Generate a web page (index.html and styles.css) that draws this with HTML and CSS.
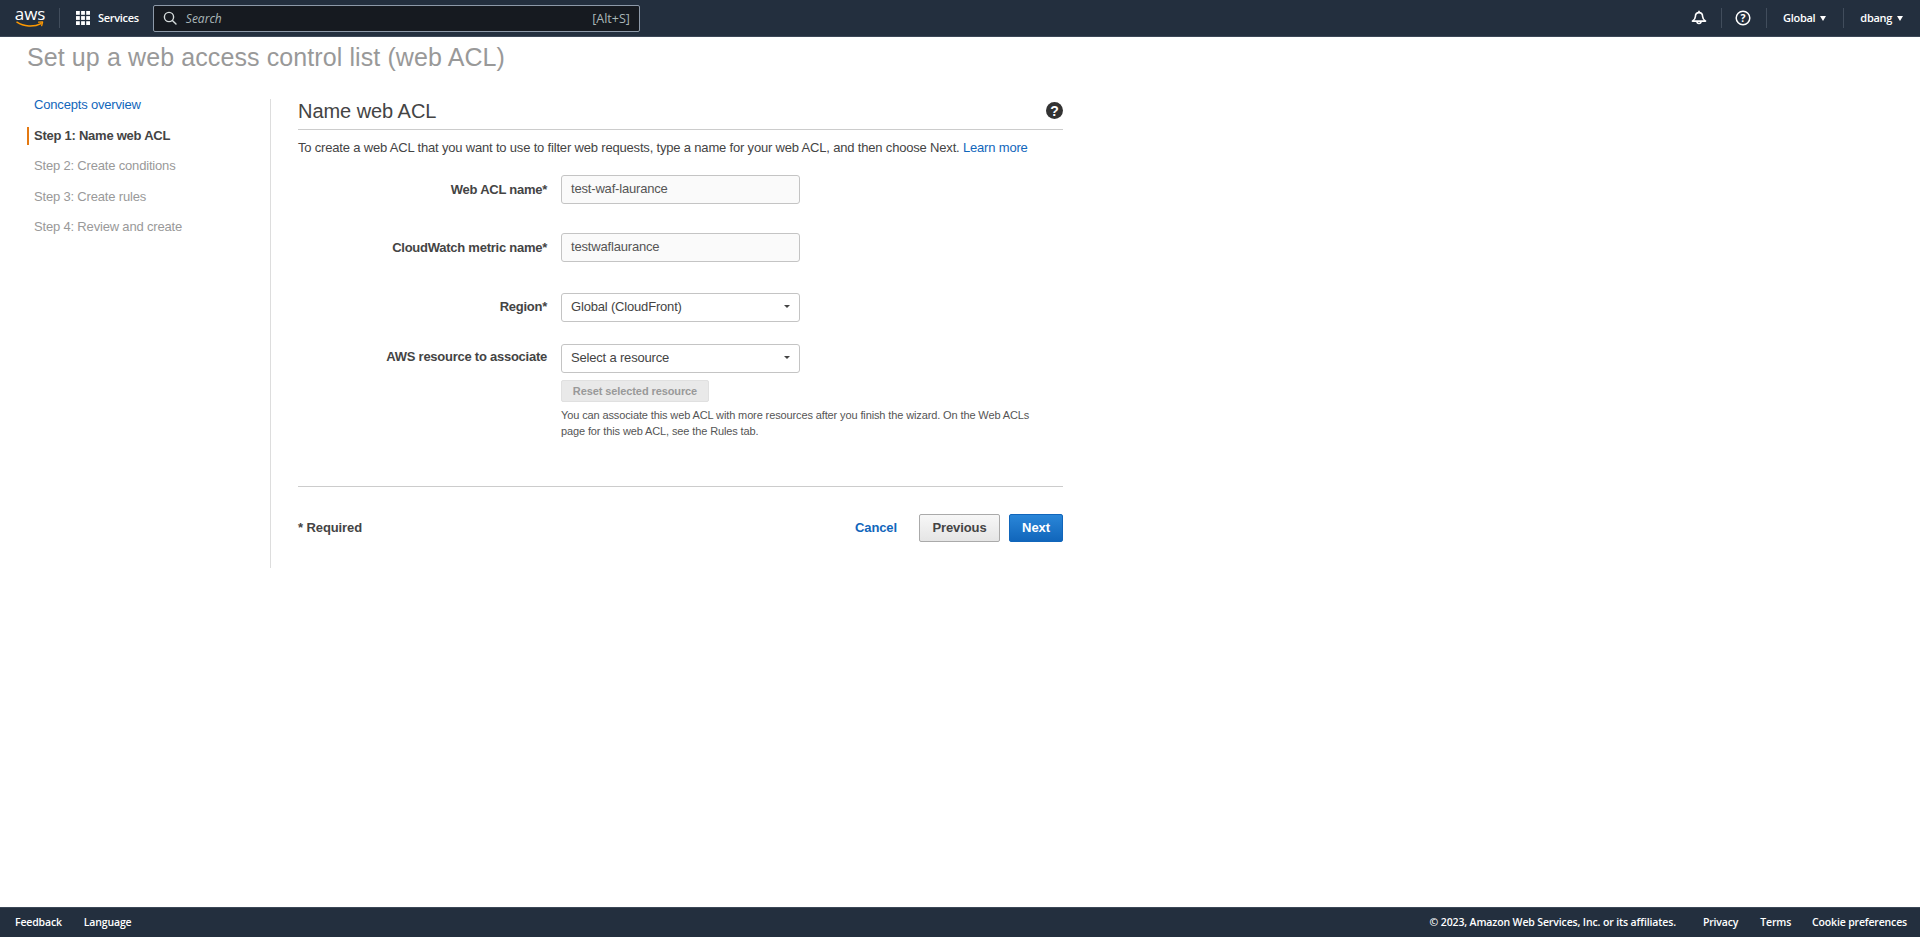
FILE: index.html
```html
<!DOCTYPE html>
<html lang="en">
<head>
<meta charset="utf-8">
<title>Set up a web access control list (web ACL)</title>
<link rel="stylesheet" href="styles.css">
</head>
<body>
<header class="topnav">
  <div class="logo">
    <span class="logo-text">aws</span>
    <svg class="logo-smile" width="28" height="7" viewBox="0 0 28 7"><path d="M1 1.200C7.500 5.800 18 6.400 25 2.600" fill="none" stroke="#f90" stroke-width="1.500" stroke-linecap="round"/><path d="M22.600 1.200L26.600 1l-.9 3.600" fill="none" stroke="#f90" stroke-width="1.300" stroke-linecap="round" stroke-linejoin="round"/></svg>
  </div>
  <span class="nav-sep sep-logo"></span>
  <svg class="grid-icon" width="14" height="14" viewBox="0 0 14 14" fill="#fff"><rect width="3.800" height="3.800"/><rect x="5.100" width="3.800" height="3.800"/><rect x="10.200" width="3.800" height="3.800"/><rect y="5.100" width="3.800" height="3.800"/><rect x="5.100" y="5.100" width="3.800" height="3.800"/><rect x="10.200" y="5.100" width="3.800" height="3.800"/><rect y="10.200" width="3.800" height="3.800"/><rect x="5.100" y="10.200" width="3.800" height="3.800"/><rect x="10.200" y="10.200" width="3.800" height="3.800"/></svg>
  <span class="nav-text services">Services</span>
  <div class="search">
    <svg width="14" height="14" viewBox="0 0 14 14" fill="none" stroke="#d5dbdb" stroke-width="1.400"><circle cx="6" cy="6" r="4.600"/><path d="M9.400 9.400L13 13" stroke-linecap="round"/></svg>
    <span class="search-text">Search</span>
    <span class="search-key">[Alt+S]</span>
  </div>
  <div class="nav-right">
    <svg class="bell" width="16" height="16" viewBox="0 0 16 16" fill="none" stroke="#fff" stroke-width="1.600" stroke-linejoin="round"><path d="M8 2.600c-2.600 0-3.600 1.800-3.600 3.900 0 2-.8 3.100-3 4.600h13.200c-2.200-1.500-3-2.600-3-4.600C11.600 4.400 10.600 2.600 8 2.600z"/><path d="M6 11.500a2 2 0 0 0 4 0M8 .8v1.800"/></svg>
    <span class="nav-sep"></span>
    <svg class="help" width="16" height="16" viewBox="0 0 16 16"><circle cx="8" cy="8" r="6.800" fill="none" stroke="#fff" stroke-width="1.500"/><text x="8" y="11.800" class="help-glyph">?</text></svg>
    <span class="nav-sep"></span>
    <span class="nav-text">Global</span><span class="caret"></span>
    <span class="nav-sep"></span>
    <span class="nav-text">dbang</span><span class="caret"></span>
  </div>
</header>

<main class="page">
  <h1 class="page-title">Set up a web access control list (web ACL)</h1>
  <div class="wizard">
    <nav class="steps">
      <a class="concepts">Concepts overview</a>
      <div class="step active">Step 1: Name web ACL</div>
      <div class="step">Step 2: Create conditions</div>
      <div class="step">Step 3: Create rules</div>
      <div class="step">Step 4: Review and create</div>
    </nav>
    <section class="panel">
      <div class="panel-head">
        <h2 class="panel-title">Name web ACL</h2>
        <svg class="info" width="17" height="17" viewBox="0 0 17 17"><circle cx="8.500" cy="8.500" r="8.500" fill="#333"/><text x="8.500" y="13.500" class="info-glyph">?</text></svg>
      </div>
      <p class="intro">To create a web ACL that you want to use to filter web requests, type a name for your web ACL, and then choose Next. <a class="link">Learn more</a></p>
      <div class="form">
        <div class="row row-first">
          <label class="label">Web ACL name*</label>
          <div class="field input">test-waf-laurance</div>
        </div>
        <div class="row row-second">
          <label class="label">CloudWatch metric name*</label>
          <div class="field input">testwaflaurance</div>
        </div>
        <div class="row row-select">
          <label class="label label-region">Region*</label>
          <div class="field select">Global (CloudFront)<span class="select-caret"></span></div>
        </div>
        <div class="row">
          <label class="label label-resource">AWS resource to associate</label>
          <div class="control">
            <div class="field select">Select a resource<span class="select-caret"></span></div>
            <button class="reset" type="button">Reset selected resource</button>
            <p class="hint">You can associate this web ACL with more resources after you finish the wizard. On the Web ACLs page for this web ACL, see the Rules tab.</p>
          </div>
        </div>
      </div>
      <div class="actions">
        <span class="required">* Required</span>
        <a class="cancel">Cancel</a>
        <button class="btn btn-prev" type="button">Previous</button>
        <button class="btn btn-next" type="button">Next</button>
      </div>
    </section>
  </div>
</main>

<footer class="footer">
  <span>Feedback</span>
  <span class="lang">Language</span>
  <span class="copy">© 2023, Amazon Web Services, Inc. or its affiliates.</span>
  <span class="foot-link foot-first">Privacy</span>
  <span class="foot-link">Terms</span>
  <span class="foot-link foot-last">Cookie preferences</span>
</footer>
</body>
</html>
```

FILE: styles.css
```css
* { box-sizing: border-box; }
html, body { height: 100%; }
body {
  margin: 0;
  display: flex;
  flex-direction: column;
  height: 937px;
  overflow: hidden;
  background: #fff;
  color: #444;
  font-family: "Liberation Sans", Arial, sans-serif;
  font-size: 13px;
  letter-spacing: -.18px;
}
.topnav {
  height: 37px;
  flex: none;
  display: flex;
  align-items: center;
  background: #232f3e;
  border-bottom: 1px solid #3b4757;
  padding-left: 16px;
  color: #fff;
  font-family: "Open Sans", sans-serif;
  letter-spacing: 0;
}
.logo { width: 28px; height: 24px; display: flex; flex-direction: column; align-items: center; }
.logo-text { font: 400 17px/15px "Open Sans", sans-serif; letter-spacing: -.1px; color: #fff; }
.logo-smile { margin-top: 0; }
.nav-sep { width: 1px; height: 20px; background: #414d5c; flex: none; }
.sep-logo { margin: 0 16px 0 15px; }
.grid-icon { flex: none; }
.nav-text { font-size: 11px; font-weight: 600; color: #fff; letter-spacing: -.3px; padding-bottom: 1px; }
.services { margin-left: 8px; }
.search {
  width: 487px;
  height: 27px;
  margin-left: 14px;
  display: flex;
  align-items: center;
  padding: 0 9px 0 9px;
  background: #161a20;
  border: 1px solid #8d99a8;
  border-radius: 2px;
}
.search-text { margin-left: 9px; font-size: 12px; font-style: italic; color: #aab7b8; }
.search-key { margin-left: auto; font-size: 12.500px; color: #aab7b8; }
.nav-right { margin-left: auto; display: flex; align-items: center; padding-right: 17px; }
.bell { margin-right: 14px; }
.help { margin: 0 15px 0 13px; }
.help-glyph { font: 700 10.500px "Open Sans", sans-serif; fill: #fff; text-anchor: middle; }
.nav-right .nav-text { margin-left: 16px; }
.caret {
  width: 0; height: 0; margin: 1px 17px 0 5px;
  border-left: 3.500px solid transparent;
  border-right: 3.500px solid transparent;
  border-top: 5px solid #fff;
}
.nav-right .caret:last-child { margin-right: 0; }

.page { flex: 1; min-height: 0; padding-left: 27px; }
.page-title { margin: 5px 0 0; font-size: 25px; line-height: 30px; font-weight: 400; color: #999; letter-spacing: .1px; }
.wizard { display: flex; margin-top: 27px; }
.steps { width: 244px; height: 469px; border-right: 1px solid #ddd; flex: none; }
.concepts { display: block; margin: 0 0 0 7px; line-height: 12px; color: #1166bb; }
.step { margin-top: 15.500px; padding-left: 7px; height: 15px; line-height: 15px; color: #999; }
.step.active { margin-top: 16px; padding-left: 5px; border-left: 2px solid #e47911; height: 18px; line-height: 17px; font-weight: 700; color: #444; letter-spacing: -.25px; }
.step.active + .step { margin-top: 13px; }
.panel { width: 765px; margin-left: 27px; flex: none; }
.panel-head { height: 31px; display: flex; justify-content: space-between; align-items: flex-start; border-bottom: 1px solid #ccc; }
.panel-title { margin: 1px 0 0; font-size: 20px; line-height: 22px; font-weight: 400; color: #444; letter-spacing: -.05px; }
.info { margin-top: 3px; }
.intro { margin: 10px 0 0; line-height: 15px; color: #444; }
.link { color: #1166bb; }
.form { margin-top: 20px; }
.row { display: grid; grid-template-columns: 249px 239px; column-gap: 14px; align-items: start; }
.row-first { height: 58px; }
.row-second { height: 60px; }
.row-select { height: 51px; }
.label { text-align: right; font-weight: 700; line-height: 15px; color: #444; padding-top: 7px; letter-spacing: -.25px; }
.label-region { padding-top: 6px; }
.label-resource { padding-top: 5px; }
.field { height: 29px; line-height: 26px; border: 1px solid #c4c4c4; border-radius: 3px; padding-left: 9px; color: #555; position: relative; }
.input { background: #fafafa; }
.select { background: #fff; color: #444; }
.select-caret { position: absolute; right: 9px; top: 11px; width: 0; height: 0; border-left: 3px solid transparent; border-right: 3px solid transparent; border-top: 3px solid #444; }
.reset {
  display: block;
  width: 148px; height: 22px; margin-top: 7px; padding: 0;
  background: #e9e9e9;
  border: 1px solid #e0e0e0; border-radius: 2px;
  font: 700 11px "Liberation Sans", sans-serif; color: #999; letter-spacing: -.1px;
}
.hint { margin: 5px 0 0; width: 480px; font-size: 11px; line-height: 16px; color: #555; letter-spacing: -.12px; }
.actions { margin-top: 47px; border-top: 1px solid #ccc; padding-top: 27px; display: flex; align-items: center; }
.required { font-weight: 700; color: #444; margin: 0 auto 2px 0; line-height: 15px; letter-spacing: -.1px; }
.cancel { font-weight: 700; color: #1166bb; margin: 0 22px 2px 0; line-height: 15px; letter-spacing: -.1px; }
.btn { height: 28px; padding: 0 0 2px; border-radius: 2px; font: 700 13px "Liberation Sans", sans-serif; letter-spacing: -.1px; }
.btn-prev { width: 81px; background: linear-gradient(#f7f7f7, #e5e5e5); border: 1px solid #aaa; color: #444; }
.btn-next { width: 54px; margin-left: 9px; background: linear-gradient(#2a86d8, #1166bb); border: 1px solid #1166bb; color: #fff; }

.footer {
  height: 30px;
  flex: none;
  display: flex;
  align-items: center;
  padding: 0 13px 1px 15px;
  background: #232f3e;
  border-top: 1px solid #3b4757;
  color: #fff;
  font-family: "Open Sans", sans-serif;
  font-size: 10.500px;
  font-weight: 600;
  letter-spacing: -.16px;
}
.lang { margin-left: 22px; }
.copy { margin-left: auto; letter-spacing: -.13px; }
.foot-link { margin-left: 22px; }
.foot-first { margin-left: 27px; }
.foot-last { margin-left: 21px; }
.info-glyph { font: 700 14px "Liberation Sans", sans-serif; fill: #fff; text-anchor: middle; }
```
